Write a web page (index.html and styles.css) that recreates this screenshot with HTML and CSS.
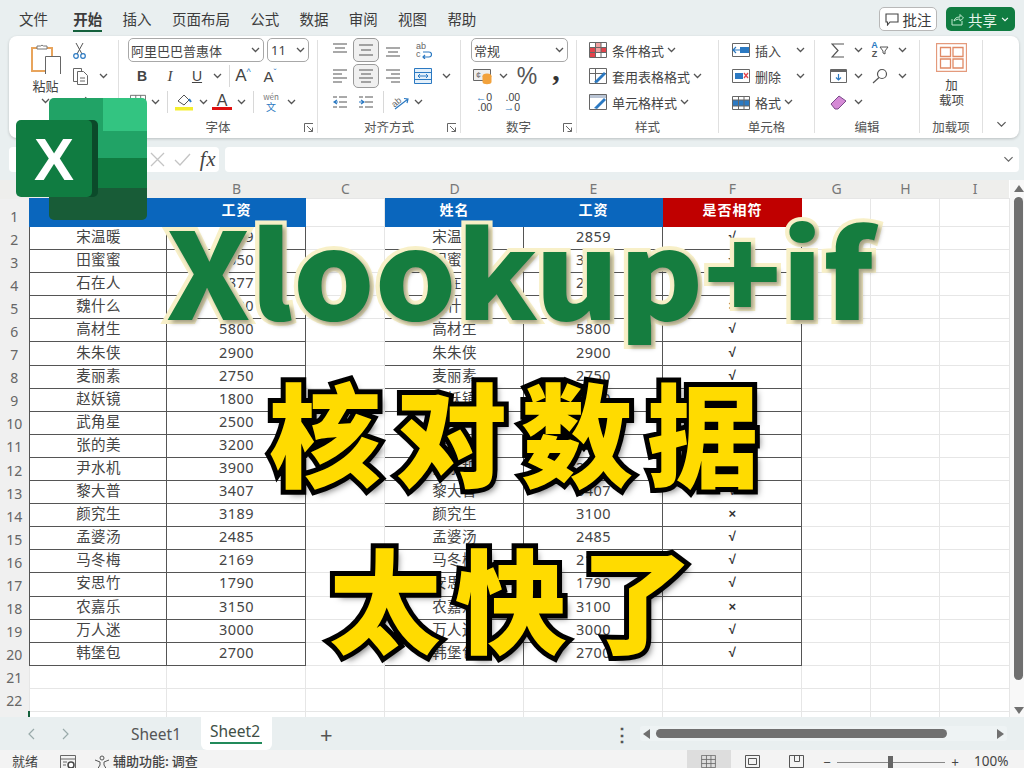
FILE: index.html
```html
<!DOCTYPE html>
<html lang="zh-CN">
  <head>
    <meta charset="UTF-8" />
    <title>Xlookup+if 核对数据</title>
    <link rel="stylesheet" href="styles.css">
  </head>
  <body>
    <svg class="defs" width="0" height="0">
      <symbol id="chev" viewBox="0 0 9 6"><path d="M1 1l3.5 3.5L8 1" fill="none" stroke="#555" stroke-width="1.3"/></symbol>
      <symbol id="launch" viewBox="0 0 10 10"><path d="M.5 9V.5H9M3 3l5.5 5.5M8.5 4.5v4h-4" fill="none" stroke="#666"/></symbol>
      <symbol id="lines3" viewBox="0 0 18 16"><path d="M2 3h14M4 8h10M2 13h14" stroke="#555" stroke-width="1.2"/></symbol>
      <symbol id="top" viewBox="0 0 18 16"><path d="M2 2h14M4 6h10M2 10h14" stroke="#555" stroke-width="1.2"/></symbol>
      <symbol id="bot" viewBox="0 0 18 16"><path d="M2 6h14M4 10h10M2 14h14" stroke="#555" stroke-width="1.2"/></symbol>
      <symbol id="left" viewBox="0 0 18 16"><path d="M2 2h14M2 6h9M2 10h14M2 14h9" stroke="#555" stroke-width="1.2"/></symbol>
      <symbol id="mid" viewBox="0 0 18 16"><path d="M2 2h14M4 6h10M2 10h14M4 14h10" stroke="#555" stroke-width="1.2"/></symbol>
      <symbol id="right" viewBox="0 0 18 16"><path d="M2 2h14M7 6h9M2 10h14M7 14h9" stroke="#555" stroke-width="1.2"/></symbol>
      <symbol id="table" viewBox="0 0 18 16"><path d="M.5.5h17v15H.5zM.5 5.5h17M.5 10.5h17M6.5.5v15M12 .5v15" fill="none" stroke="#666"/></symbol>
    </svg>

    <nav class="tabs">
      <a>文件</a><a class="on">开始</a><a>插入</a><a>页面布局</a><a>公式</a><a>数据</a><a>审阅</a><a>视图</a><a>帮助</a>
      <div class="tab-btns">
        <button class="btn-note">
          <svg width="14" height="13" viewBox="0 0 14 13"><path d="M1 1h12v8H5l-2.500 3V9H1z" fill="none" stroke="#444" stroke-width="1.100"/></svg>
          批注
        </button>
        <button class="btn-share">
          <svg width="13" height="13" viewBox="0 0 13 13"><path d="M1 6v6h10V8M3 8c.5-3 3-4 6-4V1.500L12.500 5 9 8V6C7 6 5 6.500 3 8z" fill="none" stroke="#bfe8cf"/></svg>
          共享
          <svg class="sm" width="8" height="5" viewBox="0 0 9 6"><path d="M1 1l3.500 3.500L8 1" fill="none" stroke="#fff" stroke-width="1.300"/></svg>
        </button>
      </div>
    </nav>

    <section class="ribbon">
      <div class="grp g-clip">
        <div class="clip">
          <div class="paste">
            <svg width="30" height="31" viewBox="0 0 30 31">
              <path d="M1 5h20v23H1z" fill="#fff" stroke="#e8a45c" stroke-width="2"/>
              <path d="M6 6V3h3.500a2 2 0 0 1 3 0H16v3z" fill="#fff" stroke="#777"/>
              <path d="M14.500 13.500h15v18h-15z" fill="#fff" stroke="#666"/>
            </svg>
            <span>粘贴</span>
            <svg class="chev" width="9" height="6"><use href="#chev"/></svg>
          </div>
          <div class="clip-side">
            <div class="row w-side">
              <svg width="13" height="17" viewBox="0 0 13 17"><path d="M3 1l6 11M10 1L4 12" stroke="#555" fill="none"/><circle cx="3" cy="14" r="2.300" fill="none" stroke="#2b79c2" stroke-width="1.200"/><circle cx="10" cy="14" r="2.300" fill="none" stroke="#2b79c2" stroke-width="1.200"/></svg>
            </div>
            <div class="row w-side">
              <svg width="15" height="17" viewBox="0 0 15 17"><path d="M4.500 13.500H.5V.5h8v3" fill="none" stroke="#666"/><path d="M4.500 3.500h6l4 4v9h-10z" fill="#fff" stroke="#666"/><path d="M7 10h5M7 13h5" stroke="#666"/></svg>
              <svg class="chev ml" width="9" height="6"><use href="#chev"/></svg>
            </div>
            <div class="row w-side">
              <svg width="14" height="14" viewBox="0 0 14 14"><path d="M2 13l5-7 3 2 3-6" fill="none" stroke="#666" stroke-width="1.500"/></svg>
            </div>
          </div>
        </div>
        <div class="lbl">剪贴板</div>
      </div>
      <i class="vr"></i>

      <div class="grp g-font">
        <div class="row">
          <div class="combo c-font"><span>阿里巴巴普惠体</span><svg width="9" height="6"><use href="#chev"/></svg></div>
          <div class="combo c-size"><span>11</span><svg width="9" height="6"><use href="#chev"/></svg></div>
        </div>
        <div class="row r-font2">
          <b class="ic w28 t-b">B</b><i class="ic w28 t-i">I</i><u class="ic w26 t-u">U</u>
          <span class="ic w14"><svg width="9" height="6"><use href="#chev"/></svg></span>
          <span class="ic w10"><i class="vr-s"></i></span>
          <span class="ic w18 t-a">A<sup>^</sup></span>
          <span class="ic w36 t-a2">A<sup>ˇ</sup></span>
        </div>
        <div class="row r-font3">
          <span class="ic w20"><svg width="16" height="16"><use href="#table"/></svg></span>
          <span class="ic w14"><svg width="9" height="6"><use href="#chev"/></svg></span>
          <span class="ic w10"><i class="vr-s"></i></span>
          <span class="ic w24"><svg width="20" height="18" viewBox="0 0 20 18"><path d="M4 8l6-6 5 5-5 5z" fill="none" stroke="#555"/><path d="M15 6l2 3" stroke="#2b79c2" stroke-width="2"/><path d="M1 14h18v3.500H1z" fill="#f4ee2e"/></svg></span>
          <span class="ic w14"><svg width="9" height="6"><use href="#chev"/></svg></span>
          <span class="ic w24 t-col">A</span>
          <span class="ic w14"><svg width="9" height="6"><use href="#chev"/></svg></span>
          <span class="ic w10"><i class="vr-s"></i></span>
          <span class="ic w26 t-wen">wén<br><em>文</em></span>
          <span class="ic w14"><svg width="9" height="6"><use href="#chev"/></svg></span>
        </div>
        <div class="lbl">字体<svg class="launch" width="10" height="10"><use href="#launch"/></svg></div>
      </div>
      <i class="vr"></i>

      <div class="grp g-align">
        <div class="row">
          <span class="ic w26"><svg width="18" height="16"><use href="#top"/></svg></span>
          <span class="ic w26 sel"><svg width="18" height="16"><use href="#lines3"/></svg></span>
          <span class="ic w28"><svg width="18" height="16"><use href="#bot"/></svg></span>
          <span class="ic w32"><svg width="18" height="18" viewBox="0 0 18 18"><text x="2" y="8" class="svg-t">ab</text><text x="2" y="16" class="svg-t">c</text><path d="M9 11h6a2 2 0 0 1 0 5H9m2-2l-2 2 2 2" fill="none" stroke="#2b79c2" stroke-width="1.200"/></svg></span>
        </div>
        <div class="row">
          <span class="ic w26"><svg width="18" height="16"><use href="#left"/></svg></span>
          <span class="ic w26 sel"><svg width="18" height="16"><use href="#mid"/></svg></span>
          <span class="ic w28"><svg width="18" height="16"><use href="#right"/></svg></span>
          <span class="ic w32"><svg width="18" height="16" viewBox="0 0 18 16"><path d="M.5.500h17v15H.5z" fill="#e4f0fa" stroke="#2b79c2"/><path d="M.5 4.500h17M.5 11.500h17" stroke="#2b79c2"/><path d="M4 8h10M6 6L4 8l2 2M12 6l2 2-2 2" fill="none" stroke="#2b79c2"/></svg></span>
          <span class="ic w14"><svg width="9" height="6"><use href="#chev"/></svg></span>
        </div>
        <div class="row">
          <span class="ic w26"><svg width="16" height="14" viewBox="0 0 16 14"><path d="M7 2h8M7 7h8M7 12h8M1 2h4M1 12h4" stroke="#555"/><path d="M5 5L2 7l3 2M2 7h4" fill="none" stroke="#2b79c2" stroke-width="1.200"/></svg></span>
          <span class="ic w26"><svg width="16" height="14" viewBox="0 0 16 14"><path d="M7 2h8M7 7h8M7 12h8M1 2h4M1 12h4" stroke="#555"/><path d="M3 5l3 2-3 2M1 7h4" fill="none" stroke="#2b79c2" stroke-width="1.200"/></svg></span>
          <span class="ic w8"><i class="vr-s"></i></span>
          <span class="ic w26"><svg width="19" height="17" viewBox="0 0 19 17"><text x="1" y="11" class="svg-t" transform="rotate(-40 6 9)">ab</text><path d="M4 15L17 5m-4-.500l4 .500-1 4" fill="none" stroke="#2b79c2" stroke-width="1.200"/></svg></span>
          <span class="ic w10"><svg width="9" height="6"><use href="#chev"/></svg></span>
        </div>
        <div class="lbl">对齐方式<svg class="launch" width="10" height="10"><use href="#launch"/></svg></div>
      </div>
      <i class="vr"></i>

      <div class="grp g-num">
        <div class="row">
          <div class="combo c-num"><span>常规</span><svg width="9" height="6"><use href="#chev"/></svg></div>
        </div>
        <div class="row">
          <span class="ic w24"><svg width="20" height="17" viewBox="0 0 20 17"><path d="M.5 1.500h17v11H.5z" fill="#eee" stroke="#666"/><text x="3" y="10" class="svg-t">¢</text><ellipse cx="14" cy="8" rx="4.500" ry="2.500" fill="#f2a23c"/><path d="M9.500 8v6c0 3 9 3 9 0V8z" fill="#f2a23c"/></svg></span>
          <span class="ic w16"><svg width="9" height="6"><use href="#chev"/></svg></span>
          <span class="ic w32 t-pct">%</span>
          <span class="ic w26 t-comma">,</span>
        </div>
        <div class="row">
          <span class="ic w26 t-dec"><span><b>←</b>0<br>.00</span></span>
          <span class="ic w30 t-dec"><span>.00<br><b>→</b>0</span></span>
        </div>
        <div class="lbl">数字<svg class="launch" width="10" height="10"><use href="#launch"/></svg></div>
      </div>
      <i class="vr"></i>

      <div class="grp g-style">
        <div class="row tx">
          <svg width="18" height="16" viewBox="0 0 18 16"><path d="M.5.500h17v15H.5z" fill="#fff" stroke="#666"/><path d="M1 5h5v10H1zM12 5h5v5h-5z" fill="#e2434b"/><path d="M6 1h6v9H6z" fill="#f0a0a0"/><path d="M.5 5.500h17M.5 10.500h17M6.500.5v15M12 .5v15" stroke="#666" fill="none"/></svg>
          <span>条件格式</span><svg width="9" height="6"><use href="#chev"/></svg>
        </div>
        <div class="row tx">
          <svg width="18" height="16" viewBox="0 0 18 16"><path d="M.5.500h17v15H.5zM.5 5.500h17M6.500.5v15" fill="none" stroke="#666"/><path d="M5 14L15 4l2 2-9 9z" fill="#2b79c2"/></svg>
          <span>套用表格格式</span><svg width="9" height="6"><use href="#chev"/></svg>
        </div>
        <div class="row tx">
          <svg width="18" height="16" viewBox="0 0 18 16"><path d="M.5.500h17v15H.5z" fill="#fff" stroke="#666"/><path d="M1 1h16v3H1z" fill="#b9c4d4"/><path d="M5 14L15 4l2 2-9 9z" fill="#2b79c2"/></svg>
          <span>单元格样式</span><svg width="9" height="6"><use href="#chev"/></svg>
        </div>
        <div class="lbl">样式</div>
      </div>
      <i class="vr"></i>

      <div class="grp g-cell">
        <div class="row tx">
          <svg width="18" height="14" viewBox="0 0 18 14"><path d="M.5.500h17v13H.5z" fill="#fff" stroke="#666"/><path d="M8 4h9v6H8z" fill="#2b79c2"/><path d="M1 7h7M4 4L1 7l3 3" fill="none" stroke="#2b79c2" stroke-width="1.200"/></svg>
          <span class="wide">插入</span><svg width="9" height="6"><use href="#chev"/></svg>
        </div>
        <div class="row tx">
          <svg width="18" height="14" viewBox="0 0 18 14"><path d="M.5.500h17v13H.5z" fill="#fff" stroke="#666"/><path d="M3 4h8v6H3z" fill="#2b79c2"/><path d="M12 4l4 5M16 4l-4 5" stroke="#e2434b" stroke-width="1.300"/></svg>
          <span class="wide">删除</span><svg width="9" height="6"><use href="#chev"/></svg>
        </div>
        <div class="row tx">
          <svg width="18" height="16" viewBox="0 0 18 16"><path d="M.5 2.500h17v13H.5z" fill="#fff" stroke="#666"/><path d="M1 6h16v6H1z" fill="#2b79c2"/><path d="M6.500 2v14M12 2v14M.5 6h17M.5 12h17" stroke="#666"/></svg>
          <span>格式</span><svg width="9" height="6"><use href="#chev"/></svg>
        </div>
        <div class="lbl">单元格</div>
      </div>
      <i class="vr"></i>

      <div class="grp g-edit">
        <div class="row">
          <span class="ic w26"><svg width="14" height="15" viewBox="0 0 14 15"><path d="M13 1H1l6 6.500L1 14h12" fill="none" stroke="#555" stroke-width="1.200"/></svg></span>
          <span class="ic w14"><svg width="9" height="6"><use href="#chev"/></svg></span>
          <span class="ic w30 t-sort"><em>A<br><b>Z</b></em><svg width="10" height="9" viewBox="0 0 10 9"><path d="M1 1h8L6 5v3L4 7V5z" fill="none" stroke="#555"/></svg></span>
          <span class="ic w14"><svg width="9" height="6"><use href="#chev"/></svg></span>
        </div>
        <div class="row">
          <span class="ic w26"><svg width="17" height="14" viewBox="0 0 17 14"><path d="M.5.500h16v13H.5z" fill="#fff" stroke="#666"/><path d="M1 1h15v2H1z" fill="#666"/><path d="M8.500 5v6M6 8.500l2.500 2.500L11 8.500" fill="none" stroke="#2b79c2" stroke-width="1.200"/></svg></span>
          <span class="ic w14"><svg width="9" height="6"><use href="#chev"/></svg></span>
          <span class="ic w30"><svg width="16" height="16" viewBox="0 0 16 16"><circle cx="10" cy="6" r="4.500" fill="none" stroke="#555" stroke-width="1.200"/><path d="M7 9.500L1 15" stroke="#555" stroke-width="1.200"/></svg></span>
          <span class="ic w14"><svg width="9" height="6"><use href="#chev"/></svg></span>
        </div>
        <div class="row">
          <span class="ic w26"><svg width="17" height="15" viewBox="0 0 17 15"><path d="M1 9l8-8 7 5-8 8H5z" fill="#d58ad6" stroke="#7a4a8a"/></svg></span>
          <span class="ic w14"><svg width="9" height="6"><use href="#chev"/></svg></span>
        </div>
        <div class="lbl">编辑</div>
      </div>
      <i class="vr"></i>

      <div class="grp g-add">
        <div class="add">
          <svg width="31" height="29" viewBox="0 0 31 29"><path d="M.5.500h30v28H.5z" fill="#fff" stroke="#e49a7c" stroke-width="1.300"/><path d="M4.500 4.500h10v9h-10zM17 4.500h10v9H17zM4.500 16h10v9h-10zM17 16h10v9H17z" fill="#fff" stroke="#e08a66" stroke-width="1.300"/></svg>
          <span>加<br>载项</span>
        </div>
        <div class="lbl">加载项</div>
      </div>
      <i class="vr"></i>

      <div class="grp g-more">
        <svg width="11" height="7" viewBox="0 0 9 6"><path d="M1 1l3.500 3.500L8 1" fill="none" stroke="#555" stroke-width="1"/></svg>
      </div>
    </section>

    <div class="fbar">
      <div class="namebox">
        <svg width="15" height="15" viewBox="0 0 15 15"><path d="M1 1l13 13M14 1L1 14" stroke="#c4c4c4" stroke-width="1.300"/></svg>
        <svg width="17" height="13" viewBox="0 0 17 13"><path d="M1 7l5 5L16 1" fill="none" stroke="#c4c4c4" stroke-width="1.300"/></svg>
        <span class="fx">fx</span>
      </div>
      <div class="finput"><svg width="11" height="7" viewBox="0 0 9 6"><path d="M1 1l3.500 3.500L8 1" fill="none" stroke="#666" stroke-width="1"/></svg></div>
    </div>

    <main class="sheet">
      <table class="grid">
        <colgroup>
          <col class="c-h"><col class="c-a"><col class="c-b"><col class="c-c"><col class="c-b"><col class="c-b"><col class="c-b"><col class="c-g"><col class="c-g"><col class="c-i">
        </colgroup>
        <tr class="letters"><th></th><th>A</th><th>B</th><th>C</th><th>D</th><th>E</th><th>F</th><th>G</th><th>H</th><th>I</th></tr>
        <tr class="first"><th>1</th><td class="hd">姓名</td><td class="hd">工资</td><td></td><td class="hd">姓名</td><td class="hd">工资</td><td class="hd red">是否相符</td><td></td><td></td><td></td></tr>
        <tr><th>2</th><td class="d">宋温暖</td><td class="d">2859</td><td></td><td class="d">宋温暖</td><td class="d">2859</td><td class="d m">√</td><td></td><td></td><td></td></tr>
        <tr><th>3</th><td class="d">田蜜蜜</td><td class="d">3650</td><td></td><td class="d">田蜜蜜</td><td class="d">3650</td><td class="d m">√</td><td></td><td></td><td></td></tr>
        <tr><th>4</th><td class="d">石在人</td><td class="d">2877</td><td></td><td class="d">石在人</td><td class="d">2877</td><td class="d m">√</td><td></td><td></td><td></td></tr>
        <tr><th>5</th><td class="d">魏什么</td><td class="d">3200</td><td></td><td class="d">魏什么</td><td class="d">2800</td><td class="d m">×</td><td></td><td></td><td></td></tr>
        <tr><th>6</th><td class="d">高材生</td><td class="d">5800</td><td></td><td class="d">高材生</td><td class="d">5800</td><td class="d m">√</td><td></td><td></td><td></td></tr>
        <tr><th>7</th><td class="d">朱朱侠</td><td class="d">2900</td><td></td><td class="d">朱朱侠</td><td class="d">2900</td><td class="d m">√</td><td></td><td></td><td></td></tr>
        <tr><th>8</th><td class="d">麦丽素</td><td class="d">2750</td><td></td><td class="d">麦丽素</td><td class="d">2750</td><td class="d m">√</td><td></td><td></td><td></td></tr>
        <tr><th>9</th><td class="d">赵妖镜</td><td class="d">1800</td><td></td><td class="d">赵妖镜</td><td class="d">1800</td><td class="d m">√</td><td></td><td></td><td></td></tr>
        <tr><th>10</th><td class="d">武角星</td><td class="d">2500</td><td></td><td class="d">武角星</td><td class="d">2500</td><td class="d m">√</td><td></td><td></td><td></td></tr>
        <tr><th>11</th><td class="d">张的美</td><td class="d">3200</td><td></td><td class="d">张的美</td><td class="d">3200</td><td class="d m">√</td><td></td><td></td><td></td></tr>
        <tr><th>12</th><td class="d">尹水机</td><td class="d">3900</td><td></td><td class="d">尹水机</td><td class="d">3900</td><td class="d m">√</td><td></td><td></td><td></td></tr>
        <tr><th>13</th><td class="d">黎大普</td><td class="d">3407</td><td></td><td class="d">黎大普</td><td class="d">3407</td><td class="d m">√</td><td></td><td></td><td></td></tr>
        <tr><th>14</th><td class="d">颜究生</td><td class="d">3189</td><td></td><td class="d">颜究生</td><td class="d">3100</td><td class="d m">×</td><td></td><td></td><td></td></tr>
        <tr><th>15</th><td class="d">孟婆汤</td><td class="d">2485</td><td></td><td class="d">孟婆汤</td><td class="d">2485</td><td class="d m">√</td><td></td><td></td><td></td></tr>
        <tr><th>16</th><td class="d">马冬梅</td><td class="d">2169</td><td></td><td class="d">马冬梅</td><td class="d">2169</td><td class="d m">√</td><td></td><td></td><td></td></tr>
        <tr><th>17</th><td class="d">安思竹</td><td class="d">1790</td><td></td><td class="d">安思竹</td><td class="d">1790</td><td class="d m">√</td><td></td><td></td><td></td></tr>
        <tr><th>18</th><td class="d">农嘉乐</td><td class="d">3150</td><td></td><td class="d">农嘉乐</td><td class="d">3100</td><td class="d m">×</td><td></td><td></td><td></td></tr>
        <tr><th>19</th><td class="d">万人迷</td><td class="d">3000</td><td></td><td class="d">万人迷</td><td class="d">3000</td><td class="d m">√</td><td></td><td></td><td></td></tr>
        <tr><th>20</th><td class="d">韩堡包</td><td class="d">2700</td><td></td><td class="d">韩堡包</td><td class="d">2700</td><td class="d m">√</td><td></td><td></td><td></td></tr>
        <tr><th>21</th><td></td><td></td><td></td><td></td><td></td><td></td><td></td><td></td><td></td></tr>
        <tr><th>22</th><td></td><td></td><td></td><td></td><td></td><td></td><td></td><td></td><td></td></tr>
        <tr class="last"><th></th><td></td><td></td><td></td><td></td><td></td><td></td><td></td><td></td><td></td></tr>
      </table>
      <div class="vscroll">
        <i class="tri-up"></i>
        <i class="vthumb"></i>
        <i class="tri-down"></i>
      </div>
    </main>

    <div class="sheetbar">
      <span class="nav">
        <svg width="8" height="12" viewBox="0 0 8 12"><path d="M7 1L2 6l5 5" fill="none" stroke="#9aa" stroke-width="1.200"/></svg>
        <svg width="8" height="12" viewBox="0 0 8 12"><path d="M1 1l5 5-5 5" fill="none" stroke="#9aa" stroke-width="1.200"/></svg>
      </span>
      <a class="st">Sheet1</a>
      <a class="st on">Sheet2</a>
      <span class="plus">+</span>
      <span class="dots">⋮</span>
      <div class="hscroll">
        <i class="tri-l"></i><i class="hthumb"></i><i class="tri-r"></i>
      </div>
    </div>

    <footer class="status">
      <span class="st-ready">就绪</span>
      <svg class="st-rec" width="16" height="15" viewBox="0 0 16 15"><path d="M.5.500h15v14H.5zM.5 4h15M3 7h4M3 10h3" fill="none" stroke="#666"/><circle cx="11" cy="10" r="3" fill="#fff" stroke="#444" stroke-width="1.500"/></svg>
      <svg class="st-man" width="16" height="15" viewBox="0 0 16 15"><circle cx="8" cy="3" r="2" fill="none" stroke="#555"/><path d="M1 5l5 2v3l-3 5M15 5l-5 2v3l3 5" fill="none" stroke="#555"/></svg>
      <span class="st-acc">辅助功能: 调查</span>
      <div class="views">
        <span class="view on"><svg width="15" height="13"><use href="#table"/></svg></span>
        <span class="view"><svg width="15" height="13" viewBox="0 0 15 13"><path d="M.5.500h14v12H.5zM3.500 3.500h8v6h-8z" fill="none" stroke="#555"/></svg></span>
        <span class="view"><svg width="15" height="13" viewBox="0 0 15 13"><path d="M.5.500h14v12H.5zM5.500.5v6h5V.5" fill="none" stroke="#555"/></svg></span>
      </div>
      <div class="zoom"><span>−</span><i class="zline"><b></b></i><span>+</span></div>
      <span class="pct">100%</span>
    </footer>

    <svg class="logo" width="131" height="122" viewBox="0 0 131 122">
      <path d="M38 0h49v33H33V5a5 5 0 0 1 5-5z" fill="#21a366"/>
      <path d="M33 33h54v27H33z" fill="#21a366"/>
      <path d="M87 0h39a5 5 0 0 1 5 5v28H87z" fill="#33c481"/>
      <path d="M87 33h44v27H87z" fill="#21a366"/>
      <path d="M33 60h54v30H33zM87 60h44v30H87z" fill="#107c41"/>
      <path d="M33 90h98v27a5 5 0 0 1-5 5H38a5 5 0 0 1-5-5z" fill="#185c37"/>
      <path d="M33 22h44a5 5 0 0 1 5 5v67a5 5 0 0 1-5 5H33z" fill="#0b4a2a"/>
      <rect x="0" y="22" width="76" height="77" rx="5" fill="#107c41"/>
      <text x="18" y="82" class="logo-x">X</text>
    </svg>

    <h1 class="big big-en">Xlookup+if</h1>
    <p class="big big-a">核对数据</p>
    <p class="big big-b">太快了</p>
  </body>
</html>
```

FILE: styles.css
```css
* {
  box-sizing: border-box;
}
html,
body {
  margin: 0;
  width: 1024px;
  height: 768px;
  overflow: hidden;
}
body {
  position: relative;
  background: #e9eff0;
  font-family: "Noto Sans CJK SC", "Noto Sans", sans-serif;
  color: #444;
  font-size: 13px;
}
.defs {
  position: absolute;
}
svg {
  display: block;
  flex: none;
}

/* top tabs */
.tabs {
  height: 36px;
  display: flex;
  gap: 20.3px;
  padding: 0 0 0 19px;
  font-size: 14.5px;
  line-height: 37px;
  color: #3c3c3c;
}
.tabs a {
  height: 33px;
}
.tabs a.on {
  font-weight: 700;
  border-bottom: 2.5px solid #14603c;
  margin-left: 5px;
  height: 32px;
}
.tab-btns {
  margin-left: auto;
  display: flex;
  gap: 9px;
  padding: 7px 9px 0 0;
}
.tab-btns button {
  height: 24px;
  border-radius: 5px;
  display: flex;
  align-items: center;
  font: inherit;
  padding: 0;
}
.btn-note {
  width: 58px;
  background: #fff;
  border: 1px solid #b8b8b8;
  color: #3c3c3c;
  gap: 4px;
  justify-content: center;
}
.btn-share {
  width: 69px;
  background: #107c41;
  border: 0;
  color: #e6f5ec;
  gap: 4px;
  padding-left: 5px !important;
}

/* ribbon */
.ribbon {
  margin: 0 5px 0 9px;
  height: 102px;
  background: #fff;
  border-radius: 8px;
  box-shadow: 0 1px 3px rgba(0, 0, 0, 0.2);
  display: flex;
  padding-top: 1px;
}
.vr {
  width: 1px;
  height: 93px;
  margin-top: 3px;
  background: #e0e0e0;
}
.vr-s {
  display: block;
  width: 1px;
  height: 22px;
  background: #d8d8d8;
}
.grp {
  position: relative;
  flex: none;
}
.g-clip { width: 109px; }
.g-font { width: 198px; padding-left: 9px; }
.g-align { width: 142px; padding-left: 9px; }
.g-num { width: 115px; padding-left: 10px; }
.g-style { width: 141px; padding-left: 12px; }
.g-cell { width: 95px; padding-left: 13px; }
.g-edit { width: 104px; padding-left: 10px; }
.g-add { width: 62px; padding-left: 1px; }
.g-more { width: 36px; display: flex; justify-content: center; padding-top: 84px; }
.row {
  height: 26px;
  display: flex;
  align-items: center;
}
.ic {
  display: flex;
  align-items: center;
  justify-content: center;
  height: 24px;
  flex: none;
  font-style: normal;
}
.w8 { width: 8px; }
.w10 { width: 10px; }
.w14 { width: 14px; }
.w16 { width: 16px; }
.w18 { width: 18px; }
.w20 { width: 20px; }
.w24 { width: 24px; }
.w26 { width: 26px; }
.w28 { width: 28px; }
.w30 { width: 30px; }
.w32 { width: 32px; }
.w36 { width: 36px; }
.sel {
  background: #f0f0f0;
  border: 1px solid #9a9a9a;
  border-radius: 5px;
}
.lbl {
  position: absolute;
  top: 79px;
  left: 0;
  right: 0;
  text-align: center;
  font-size: 12.5px;
  line-height: 22px;
  color: #555;
}
.launch {
  position: absolute;
  right: 3px;
  top: 7px;
}
.combo {
  height: 24px;
  background: #fff;
  border: 1px solid #a8a8a8;
  border-radius: 5px;
  display: flex;
  align-items: center;
  justify-content: space-between;
  padding: 0 3px 0 2px;
  font-size: 13px;
  color: #444;
}
.c-font { width: 136px; }
.c-size { width: 42px; margin-left: 3px; font-family: "Noto Sans", sans-serif; padding-left: 3px; }
.c-num { width: 97px; }
.clip {
  display: flex;
  height: 78px;
}
.paste {
  width: 63px;
  display: flex;
  flex-direction: column;
  align-items: center;
  padding: 6px 0 0 10px;
  font-size: 13px;
  line-height: 17px;
}
.paste span {
  margin-top: 3px;
}
.paste .chev {
  margin-top: 4px;
}
.w-side {
  padding-left: 1px;
}
.ml {
  margin-left: 11px;
}
.t-b { font: 700 14px "Liberation Sans", sans-serif; }
.t-i { font: italic 400 15px "Liberation Serif", serif; }
.t-u { font: 400 14px "Liberation Sans", sans-serif; }
.t-a,
.t-a2 {
  font: 400 17px "Liberation Sans", sans-serif;
}
.t-a2 {
  font-size: 15px;
}
.t-a sup,
.t-a2 sup {
  font-size: 9px;
  color: #2b79c2;
  align-self: flex-start;
  margin-top: 3px;
}
.t-col {
  font: 400 16px/13px "Liberation Sans", sans-serif;
  display: block;
  text-align: center;
  height: auto;
  width: 20px;
  margin: 0 2px;
  border-bottom: 3px solid #e01010;
}
.t-wen {
  display: block;
  font-size: 8px;
  line-height: 10px;
  text-align: center;
  height: auto;
  color: #777;
}
.t-wen em {
  font-style: normal;
  color: #2b79c2;
  font-size: 10px;
}
.t-pct {
  font: 400 23px "Liberation Sans", sans-serif;
  color: #555;
}
.t-comma {
  font: 700 30px/12px "Liberation Serif", serif;
  color: #333;
  align-items: flex-start;
}
.t-dec {
  font: 400 10.5px/10px "Liberation Sans", sans-serif;
  text-align: right;
}
.t-dec b {
  color: #2b79c2;
  font-weight: 400;
}
.svg-t {
  font: 400 9px "Liberation Sans", sans-serif;
  fill: #666;
}
.t-sort {
  gap: 1px;
}
.t-sort em {
  font: 700 9px/9px "Liberation Sans", sans-serif;
  color: #2b79c2;
  text-align: center;
}
.t-sort b {
  color: #555;
}
.tx {
  gap: 5px;
  color: #444;
}
.tx svg:last-child {
  margin-left: -2px;
}
.tx .wide {
  margin-right: 12px;
}
.add {
  display: flex;
  flex-direction: column;
  align-items: center;
  padding-top: 6px;
  font-size: 12.5px;
  line-height: 15px;
  text-align: center;
}
.add span {
  margin-top: 5px;
}

/* formula bar */
.fbar {
  display: flex;
  gap: 6px;
  margin: 9px 5px 0 9px;
  height: 25px;
}
.namebox {
  width: 210px;
  background: #fff;
  border-radius: 4px;
  display: flex;
  justify-content: flex-end;
  align-items: center;
  gap: 9px;
  padding-right: 3px;
}
.fx {
  font: italic 400 21px/25px "Liberation Serif", serif;
  letter-spacing: 0.5px;
  color: #444;
}
.finput {
  flex: 1;
  background: #fff;
  border-radius: 4px;
  display: flex;
  justify-content: flex-end;
  align-items: center;
  padding-right: 5px;
}

/* sheet */
.sheet {
  margin-top: 8px;
  height: 537px;
  display: flex;
  overflow: hidden;
  background: #fff;
}
.grid {
  width: 1009px;
  table-layout: fixed;
  border-collapse: collapse;
  flex: none;
  align-self: flex-start;
  font-size: 14px;
  color: #444;
}
.c-h { width: 29px; }
.c-a { width: 137px; }
.c-b { width: 139px; }
.c-c { width: 79px; }
.c-g { width: 69px; }
.c-i { width: 70px; }
.grid tr {
  height: 23.1px;
}
.grid th {
  background: #f0f0f0;
  font-weight: 400;
  color: #666;
  font-size: 14px;
  padding: 0;
  border: 0;
  font-family: "Noto Sans", sans-serif;
  vertical-align: bottom;
  line-height: 20px;
}
.grid td {
  padding: 0 0 3px 2px;
  text-align: center;
  border: 1px solid #e6e6e6;
  font-family: "Noto Sans", "Noto Sans CJK SC", sans-serif;
  font-size: 14.5px;
  letter-spacing: 0.4px;
  line-height: 17px;
  overflow: hidden;
  white-space: nowrap;
}
.grid .letters {
  height: 18px;
}
.grid .letters th {
  background: #eeeeec;
  line-height: 18px;
  color: #777;
  vertical-align: middle;
  padding-left: 2px;
}
.grid .first {
  height: 28px;
}
.grid .last th {
  border-right: 2px solid #14603c;
}
.grid td.d {
  border: 1px solid #555;
}
.grid td.m {
  font-family: "Liberation Sans", sans-serif;
  font-weight: 700;
  font-size: 13px;
  color: #333;
}
.grid td.hd {
  background: #0a66bd;
  color: #fff;
  font-weight: 700;
  font-size: 14px;
  letter-spacing: 1px;
  border: 1px solid #0a66bd;
  padding-bottom: 7px;
}
.grid td.red {
  background: #c00000;
  border-color: #c00000;
}
.vscroll {
  flex: 1;
  background: #f8f8f8;
  position: relative;
  height: 537px;
}
.vthumb {
  position: absolute;
  left: 4px;
  top: 17px;
  width: 9px;
  height: 483px;
  border-radius: 5px;
  background: #6f6f6f;
}
.tri-up,
.tri-down,
.tri-l,
.tri-r {
  width: 0;
  height: 0;
  position: absolute;
  border-style: solid;
  border-color: transparent;
}
.tri-up {
  left: 4px;
  top: 5px;
  border-width: 0 5px 7px;
  border-bottom-color: #707070;
}
.tri-down {
  left: 4px;
  top: 527px;
  border-width: 7px 5px 0;
  border-top-color: #707070;
}

/* sheet tabs */
.sheetbar {
  height: 33px;
  display: flex;
  align-items: center;
  position: relative;
  font-size: 15.5px;
  color: #555;
  font-family: "Noto Sans", sans-serif;
}
.nav {
  width: 131px;
  padding-left: 27px;
  display: flex;
  gap: 27px;
}
.st {
  width: 49px;
}
.st.on {
  width: 71px;
  height: 33px;
  margin-left: 21px;
  background: #fff;
  border-radius: 0 0 6px 6px;
  padding: 3px 0 0 9px;
  position: relative;
  color: #3f4f46;
}
.st.on::after {
  content: "";
  position: absolute;
  left: 9px;
  width: 52px;
  top: 25px;
  height: 2px;
  background: #218a5a;
}
.plus {
  margin-left: 48px;
  font-size: 22px;
  line-height: 22px;
}
.dots {
  margin-left: 280px;
  font-size: 18px;
  font-weight: 700;
}
.hscroll {
  position: absolute;
  left: 640px;
  top: 9px;
  width: 367px;
  height: 15px;
  background: #eef3f4;
  border-radius: 3px;
}
.hthumb {
  position: absolute;
  left: 16px;
  top: 3px;
  width: 291px;
  height: 9px;
  border-radius: 5px;
  background: #707070;
}
.tri-l {
  left: 3px;
  top: 3px;
  border-width: 5px 7px 5px 0;
  border-right-color: #707070;
}
.tri-r {
  right: 3px;
  top: 3px;
  border-width: 5px 0 5px 7px;
  border-left-color: #707070;
}

/* status bar */
.status {
  height: 18px;
  background: #f3f3f3;
  display: flex;
  align-items: flex-start;
  overflow: hidden;
  font-size: 13px;
  line-height: 22px;
  color: #444;
  padding-left: 12px;
}
.st-ready {
  width: 48px;
}
.st-rec {
  margin-top: 5px;
  width: 16px;
}
.st-man {
  margin: 5px 3px 0 18px;
}
.st-acc {
  width: 574px;
  font-weight: 500;
}
.views {
  display: flex;
}
.view {
  width: 44px;
  height: 18px;
  padding: 5px 0 0 14px;
}
.view.on {
  background: #ddd;
}
.zoom {
  display: flex;
  align-items: center;
  height: 24px;
  gap: 2px;
}
.zoom span {
  width: 16px;
  text-align: center;
}
.zline {
  display: block;
  width: 108px;
  height: 1px;
  background: #888;
  position: relative;
}
.zline b {
  position: absolute;
  left: 51px;
  top: -6px;
  width: 5px;
  height: 13px;
  background: #666;
}
.pct {
  margin-left: 11px;
  font-family: "Noto Sans", sans-serif;
  font-size: 13.5px;
}

/* logo and big titles over the sheet */
.logo {
  position: absolute;
  left: 16px;
  top: 98px;
}
.logo-x {
  font: 700 60px "Liberation Sans", sans-serif;
  fill: #fff;
}
.big {
  position: absolute;
  margin: 0;
  white-space: nowrap;
  paint-order: stroke fill;
}
.big-en {
  left: 166px;
  top: 178px;
  font: 900 133px/180px "Noto Sans CJK SC", sans-serif;
  color: #157d3f;
  -webkit-text-stroke: 9px #f8f0c8;
  text-shadow: 3px 3px 5px rgba(0, 0, 0, 0.35);
  transform: scale(0.965, 0.9);
  transform-origin: left center;
}
.big-a,
.big-b {
  font: 900 112px/122px "Noto Sans CJK SC", sans-serif;
  letter-spacing: 14px;
  color: #ffdb00;
  -webkit-text-stroke: 10px #000;
  text-shadow: 5px 5px 6px rgba(0, 0, 0, 0.5);
}
.big-a {
  left: 269px;
  top: 369px;
}
.big-b {
  left: 329px;
  top: 535px;
}
```
